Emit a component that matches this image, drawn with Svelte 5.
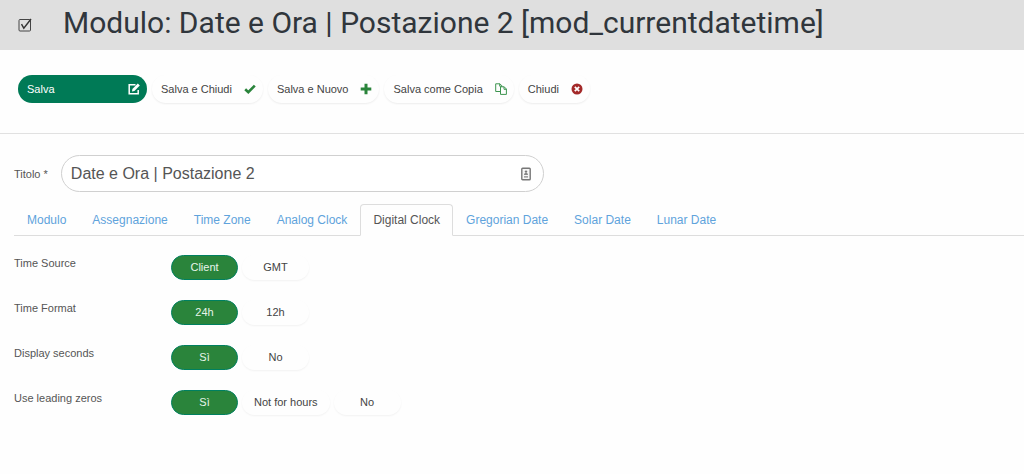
<script>
  const actions = [
    { label: 'Salva', icon: 'edit', primary: true },
    { label: 'Salva e Chiudi', icon: 'check' },
    { label: 'Salva e Nuovo', icon: 'plus' },
    { label: 'Salva come Copia', icon: 'copy' },
    { label: 'Chiudi', icon: 'cancel' }
  ]

  const tabs = [
    'Modulo',
    'Assegnazione',
    'Time Zone',
    'Analog Clock',
    'Digital Clock',
    'Gregorian Date',
    'Solar Date',
    'Lunar Date'
  ]

  const fields = [
    { name: 'source', label: 'Time Source', options: ['Client', 'GMT'] },
    { name: 'format', label: 'Time Format', options: ['24h', '12h'] },
    { name: 'seconds', label: 'Display seconds', options: ['Sì', 'No'] },
    { name: 'zeros', label: 'Use leading zeros', options: ['Sì', 'Not for hours', 'No'] }
  ]

  let title = $state('Date e Ora | Postazione 2')
  let activeTab = $state('Digital Clock')
  let values = $state({ source: 'Client', format: '24h', seconds: 'Sì', zeros: 'Sì' })

  function selectTab(event, tab) {
    event.preventDefault()
    activeTab = tab
  }
</script>

<header class="header">
  <svg class="header-icon" viewBox="0 0 14 14" aria-hidden="true">
    <rect x="1" y="1.5" width="11.5" height="11.5" rx="1" fill="none" stroke="#444" />
    <path d="M3.5 6.2 5.8 10.2 13 1" fill="none" stroke="#333" stroke-width="1.4" />
  </svg>
  <h1>Modulo: Date e Ora | Postazione 2 [mod_currentdatetime]</h1>
</header>

<div class="toolbar">
  {#each actions as action}
    <button type="button" class="action" class:primary={action.primary}>
      {action.label}
      <svg class="icon" viewBox="0 0 12 12" aria-hidden="true">
        {#if action.icon === 'edit'}
          <path d="M7.5 1.8H1.2v9h9V7" fill="none" stroke="#fff" stroke-width="1.5" />
          <path d="M4 8.4 4.4 5.9 9.8.6 11.8 2.6 6.4 8Z" fill="#fff" />
        {:else if action.icon === 'check'}
          <path d="M1.2 6.3 4.3 9.2 10.8 2.6" fill="none" stroke="#2a843b" stroke-width="2.6" />
        {:else if action.icon === 'plus'}
          <path d="M6 .7v10.6M.7 6h10.6" fill="none" stroke="#2a843b" stroke-width="3" />
        {:else if action.icon === 'copy'}
          <g fill="none" stroke="#3e9550" stroke-width="1">
            <path d="M5.5 8.5H.7V.8h4.2l2 2v1" />
            <path d="M4.7.8v2.4h2.2" />
            <path d="M5.5 3.8h3.7l2.2 2.2v5.4H5.5Z" />
            <path d="M9 3.8v2.5h2.4" />
          </g>
        {:else}
          <circle cx="6" cy="6" r="5.5" fill="#a32929" />
          <path d="M3.8 3.8 8.2 8.2M8.2 3.8 3.8 8.2" stroke="#fff" stroke-width="1.7" />
        {/if}
      </svg>
    </button>
  {/each}
</div>

<main class="content">
  <div class="title-row">
    <label for="title">Titolo *</label>
    <div class="title-box">
      <input id="title" type="text" bind:value={title} />
      <svg class="contact-icon" viewBox="0 0 10 14" aria-hidden="true">
        <rect x=".8" y="1.3" width="8.4" height="11.4" rx=".8" fill="#f6f6f6" stroke="#777" stroke-width="1.4" />
        <circle cx="5" cy="4.6" r="1.2" fill="#777" />
        <path d="M3 8c0-3 4-3 4 0ZM3 9h4v.8H3ZM3 10.5h4v.6H3Z" fill="#888" />
      </svg>
    </div>
  </div>

  <nav class="tabs">
    {#each tabs as tab}
      <a
        href="#{tab.toLowerCase().replace(' ', '-')}"
        class:active={tab === activeTab}
        onclick={(event) => selectTab(event, tab)}
      >{tab}</a>
    {/each}
  </nav>

  <div class="fields">
    {#each fields as field}
      <div class="field" role="radiogroup" aria-labelledby="{field.name}-label">
        <span class="field-label" id="{field.name}-label">{field.label}</span>
        <div class="options">
          {#each field.options as option}
            <label class="option" class:selected={values[field.name] === option}>
              <input type="radio" name={field.name} value={option} bind:group={values[field.name]} />
              {option}
            </label>
          {/each}
        </div>
      </div>
    {/each}
  </div>
</main>

<style>
  :global(body) {
    background: #fefefe;
    color: #555;
    font-family: 'Liberation Sans', Arial, sans-serif;
    font-size: 11px;
    line-height: 16px;
  }

  .header {
    display: flex;
    align-items: center;
    gap: 31px;
    height: 50px;
    padding: 0 18px;
    background: #dfdfdf;
  }

  .header-icon {
    flex: none;
    width: 14px;
    height: 14px;
  }

  h1 {
    margin: 0;
    padding-bottom: 5px;
    color: #30363c;
    font-family: Roboto, sans-serif;
    font-size: 30px;
    font-weight: 400;
    line-height: 40px;
    white-space: nowrap;
  }

  .toolbar {
    display: flex;
    flex-wrap: wrap;
    gap: 5px;
    padding: 25px 18px 30px;
    border-bottom: 1px solid #e1e1e1;
  }

  .action {
    display: flex;
    align-items: center;
    justify-content: space-between;
    gap: 12px;
    height: 28px;
    padding: 0 7px 0 9px;
    border: 0;
    border-radius: 14px;
    background: #fefefe;
    box-shadow: 0 1px 2px rgba(0, 0, 0, 0.07);
    color: #444;
    font: inherit;
    cursor: pointer;
  }

  .action.primary {
    width: 129px;
    background: #007a56;
    box-shadow: none;
    color: #fff;
  }

  .icon {
    flex: none;
    width: 12px;
    height: 12px;
  }

  .content {
    padding: 21px 0 20px 14px;
  }

  .title-row {
    display: flex;
    align-items: center;
    gap: 13px;
  }

  .title-box {
    display: flex;
    align-items: center;
    box-sizing: border-box;
    width: 483px;
    height: 37px;
    padding: 0 12px 0 9px;
    border: 1px solid #d0d0d0;
    border-radius: 19px;
    background: #fff;
  }

  .title-box input {
    flex: 1;
    min-width: 0;
    padding: 0;
    border: 0;
    outline: 0;
    background: none;
    color: #555;
    font: inherit;
    font-size: 16px;
    line-height: 24px;
  }

  .contact-icon {
    width: 10px;
    height: 14px;
  }

  .tabs {
    display: flex;
    margin-top: 12px;
    border-bottom: 1px solid #ddd;
  }

  .tabs a {
    margin-bottom: -1px;
    padding: 7px 12px;
    border: 1px solid transparent;
    border-radius: 4px 4px 0 0;
    color: #5fa3dc;
    font-size: 12px;
    text-decoration: none;
  }

  .tabs a.active {
    border-color: #ddd;
    border-bottom-color: #fefefe;
    background: #fefefe;
    color: #555;
  }

  .fields {
    display: flex;
    flex-direction: column;
    gap: 20px;
    margin-top: 19px;
  }

  .field {
    display: flex;
  }

  .field-label {
    width: 157px;
  }

  .options {
    display: flex;
    gap: 4px;
  }

  .option {
    box-sizing: border-box;
    min-width: 67px;
    height: 25px;
    padding: 0 12px;
    border-radius: 13px;
    box-shadow: 0 1px 2px rgba(0, 0, 0, 0.05);
    color: #444;
    line-height: 25px;
    text-align: center;
    cursor: pointer;
  }

  .option.selected {
    border: 1px solid #008060;
    background: #2a843b;
    box-shadow: none;
    color: #e8f5ea;
    line-height: 23px;
  }

  .option input {
    position: absolute;
    margin: 0;
    opacity: 0;
    pointer-events: none;
  }
</style>
